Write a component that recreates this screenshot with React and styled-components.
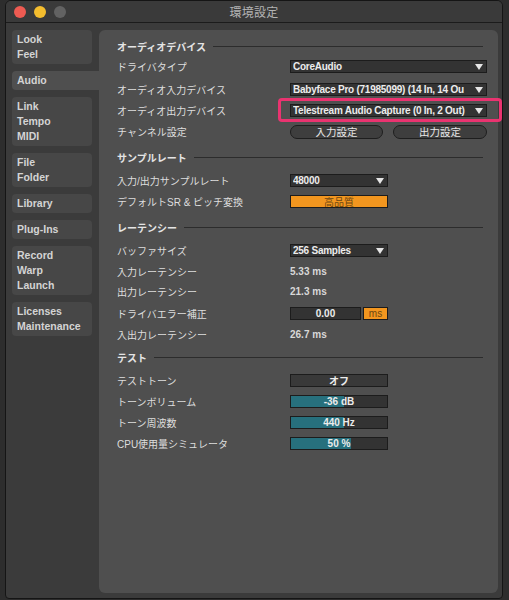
import React from "react";
import styled, { createGlobalStyle } from "styled-components";

const sans = `"Liberation Sans", "Noto Sans CJK JP", sans-serif`;

const GlobalStyle = createGlobalStyle`
html, body {
  margin: 0;
  padding: 0;
  background: #2d2d2d;
}
body {
  font-family: ${sans};
}
`;

const Window = styled.div`
  margin-left: 5px;
  width: 498px;
  height: 599px;
  box-sizing: border-box;
  border: 1px solid #151515;
  border-radius: 6px 6px 4px 4px;
  background: #3b3b3b;
  display: flex;
  flex-direction: column;
  overflow: hidden;
`;

const TitleBar = styled.div`
  position: relative;
  height: 21px;
  flex-shrink: 0;
  border-bottom: 1px solid #1b1b1b;
  background: #3a3a3a;
  display: flex;
  align-items: center;
  justify-content: center;
`;

const Lights = styled.div`
  position: absolute;
  left: 8px;
  top: 5px;
  display: flex;
  gap: 8px;
`;

const Light = styled.span`
  width: 12px;
  height: 12px;
  border-radius: 50%;
  background: ${(p) => p.$c};
`;

const Title = styled.span`
  font-size: 12px;
  color: #b3b3b3;
  letter-spacing: 0.3px;
`;

const Body = styled.div`
  flex: 1;
  display: flex;
  gap: 7px;
  padding: 7px 4px 5px 6px;
  min-height: 0;
`;

const Sidebar = styled.div`
  width: 80px;
  flex-shrink: 0;
  display: flex;
  flex-direction: column;
  gap: 7px;
`;

const NavItem = styled.div`
  padding: 2px 5px;
  border-radius: ${(p) => (p.$active ? "4px 0 0 4px" : "4px")};
  margin-right: ${(p) => (p.$active ? "-7px" : "0")};
  background: ${(p) => (p.$active ? "#4f4f4f" : "#474747")};
  font-size: 10.5px;
  font-weight: bold;
  line-height: 15px;
  color: #d4d4d4;
`;

const Panel = styled.div`
  flex: 1;
  background: #4f4f4f;
  border-radius: 6px;
  padding: 9px 11px 0 18px;
  display: flex;
  flex-direction: column;
`;

const SectionHead = styled.div`
  height: 14px;
  margin-top: ${(p) => p.$mt || 0}px;
  margin-right: 4px;
  display: flex;
  align-items: center;
  gap: 7px;
`;

const HeadText = styled.span`
  font-size: 10px;
  font-weight: bold;
  color: #e4e4e4;
  white-space: nowrap;
`;

const HeadLine = styled.span`
  flex: 1;
  height: 1px;
  background: #2c2c2c;
`;

const Row = styled.div`
  height: ${(p) => p.$h || 21}px;
  margin-top: ${(p) => p.$mt || 0}px;
  display: flex;
  align-items: center;
`;

const Label = styled.div`
  width: 173px;
  flex-shrink: 0;
  font-size: 10px;
  color: #dedede;
  white-space: nowrap;
`;

const Control = styled.div`
  position: relative;
  flex: 1;
  display: flex;
  align-items: center;
  gap: ${(p) => p.$gap || 0}px;
`;

const Select = styled.div`
  width: ${(p) => p.$w}px;
  height: 13px;
  box-sizing: border-box;
  border: 1px solid #1c1c1c;
  background: #333333;
  display: flex;
  align-items: center;
  padding: 0 3px 0 2px;
  gap: 1px;
`;

const SelectText = styled.span`
  flex: 1;
  overflow: hidden;
  white-space: nowrap;
  font-size: 10px;
  letter-spacing: -0.25px;
  font-weight: bold;
  color: #ececec;
  line-height: 11px;
`;

const Arrow = styled.span`
  flex-shrink: 0;
  width: 0;
  height: 0;
  border-left: 4px solid transparent;
  border-right: 4px solid transparent;
  border-top: 6px solid #e6e6e6;
`;

const Highlight = styled.div`
  position: absolute;
  left: -12px;
  right: -15px;
  top: -6px;
  bottom: -5px;
  border: 3px solid #ea3370;
  border-radius: 4px;
  pointer-events: none;
`;

const PillButton = styled.div`
  width: ${(p) => p.$w}px;
  height: 14px;
  box-sizing: border-box;
  border: 1px solid #1e1e1e;
  border-radius: 7px;
  background: #3e3e3e;
  display: flex;
  align-items: center;
  justify-content: center;
  font-size: 10.5px;
  color: #e6e6e6;
`;

const OrangeBox = styled.div`
  width: ${(p) => p.$w}px;
  height: 13px;
  box-sizing: border-box;
  border: 1px solid #1c1c1c;
  background: #f2961f;
  display: flex;
  align-items: center;
  justify-content: center;
  font-size: 10px;
  color: #6b4613;
`;

const Value = styled.span`
  font-size: 10px;
  font-weight: bold;
  color: #d8d8d8;
`;

const FieldBox = styled.div`
  width: ${(p) => p.$w}px;
  height: 13px;
  box-sizing: border-box;
  border: 1px solid #1c1c1c;
  background: ${(p) => p.$bg || "#333333"};
  display: flex;
  align-items: center;
  justify-content: center;
  font-size: 10px;
  font-weight: bold;
  color: #ececec;
`;

const Bar = styled.div`
  position: relative;
  width: 98px;
  height: 13px;
  box-sizing: border-box;
  border: 1px solid #1c1c1c;
  background: #333333;
  overflow: hidden;
`;

const Fill = styled.div`
  height: 100%;
  background: #27707d;
`;

const BarText = styled.span`
  position: absolute;
  inset: 0;
  display: flex;
  align-items: center;
  justify-content: center;
  font-size: 10px;
  font-weight: bold;
  color: #ececec;
`;

const nav = [
  ["Look", "Feel"],
  ["Audio"],
  ["Link", "Tempo", "MIDI"],
  ["File", "Folder"],
  ["Library"],
  ["Plug-Ins"],
  ["Record", "Warp", "Launch"],
  ["Licenses", "Maintenance"],
];

function Slider({ value, label }) {
  return (
    <Bar>
      <Fill style={{ width: `${value}%` }} />
      <BarText>{label}</BarText>
    </Bar>
  );
}

function Section({ title, mt }) {
  return (
    <SectionHead $mt={mt}>
      <HeadText>{title}</HeadText>
      <HeadLine />
    </SectionHead>
  );
}

function Dropdown({ w, children }) {
  return (
    <Select $w={w}>
      <SelectText>{children}</SelectText>
      <Arrow />
    </Select>
  );
}

export default function App() {
  return (
    <>
      <GlobalStyle />
      <Window>
        <TitleBar>
          <Lights>
            <Light $c="#ee5b52" />
            <Light $c="#f4bd2e" />
            <Light $c="#626262" />
          </Lights>
          <Title>環境設定</Title>
        </TitleBar>
        <Body>
          <Sidebar>
            {nav.map((group) => (
              <NavItem key={group[0]} $active={group[0] === "Audio"}>
                {group.map((t) => (
                  <div key={t}>{t}</div>
                ))}
              </NavItem>
            ))}
          </Sidebar>
          <Panel>
            <Section title="オーディオデバイス" />
            <Row $mt={3}>
              <Label>ドライバタイプ</Label>
              <Control>
                <Dropdown w={197}>CoreAudio</Dropdown>
              </Control>
            </Row>
            <Row $mt={2}>
              <Label>オーディオ入力デバイス</Label>
              <Control>
                <Dropdown w={197}>Babyface Pro (71985099) (14 In, 14 Ou</Dropdown>
              </Control>
            </Row>
            <Row>
              <Label>オーディオ出力デバイス</Label>
              <Control>
                <Dropdown w={197}>Telestream Audio Capture (0 In, 2 Out)</Dropdown>
                <Highlight />
              </Control>
            </Row>
            <Row>
              <Label>チャンネル設定</Label>
              <Control $gap={10}>
                <PillButton $w={93}>入力設定</PillButton>
                <PillButton $w={94}>出力設定</PillButton>
              </Control>
            </Row>

            <Section title="サンプルレート" mt={8} />
            <Row $mt={6}>
              <Label>入力/出力サンプルレート</Label>
              <Control>
                <Dropdown w={98}>48000</Dropdown>
              </Control>
            </Row>
            <Row>
              <Label>デフォルトSR &amp; ピッチ変換</Label>
              <Control>
                <OrangeBox $w={98}>高品質</OrangeBox>
              </Control>
            </Row>

            <Section title="レーテンシー" mt={8} />
            <Row $mt={6}>
              <Label>バッファサイズ</Label>
              <Control>
                <Dropdown w={98}>256 Samples</Dropdown>
              </Control>
            </Row>
            <Row $h={20}>
              <Label>入力レーテンシー</Label>
              <Control>
                <Value>5.33 ms</Value>
              </Control>
            </Row>
            <Row $h={20}>
              <Label>出力レーテンシー</Label>
              <Control>
                <Value>21.3 ms</Value>
              </Control>
            </Row>
            <Row $mt={2}>
              <Label>ドライバエラー補正</Label>
              <Control $gap={2}>
                <FieldBox $w={71}>0.00</FieldBox>
                <OrangeBox $w={25}>ms</OrangeBox>
              </Control>
            </Row>
            <Row $h={20}>
              <Label>入出力レーテンシー</Label>
              <Control>
                <Value>26.7 ms</Value>
              </Control>
            </Row>

            <Section title="テスト" mt={6} />
            <Row $mt={6}>
              <Label>テストトーン</Label>
              <Control>
                <FieldBox $w={98} $bg="#393939">オフ</FieldBox>
              </Control>
            </Row>
            <Row>
              <Label>トーンボリューム</Label>
              <Control>
                <Slider value={55} label="-36 dB" />
              </Control>
            </Row>
            <Row>
              <Label>トーン周波数</Label>
              <Control>
                <Slider value={55} label="440 Hz" />
              </Control>
            </Row>
            <Row $h={20}>
              <Label>CPU使用量シミュレータ</Label>
              <Control>
                <Slider value={62} label="50 %" />
              </Control>
            </Row>
          </Panel>
        </Body>
      </Window>
    </>
  );
}
